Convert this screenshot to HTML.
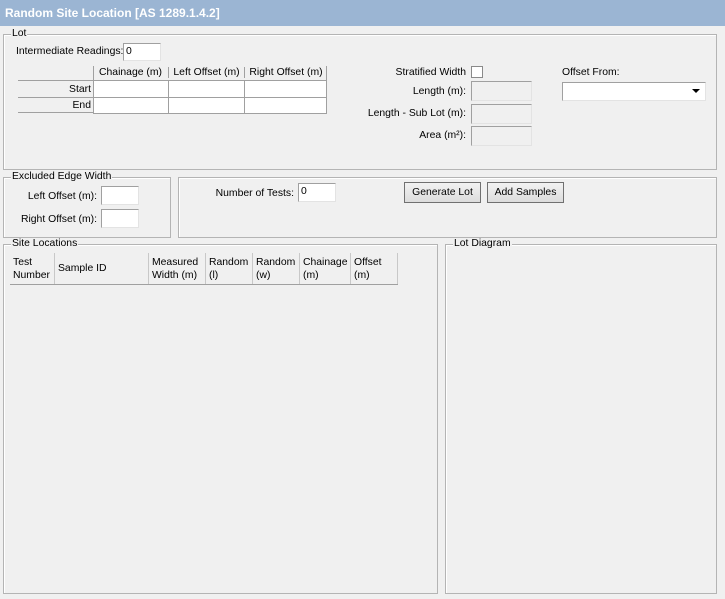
<!DOCTYPE html>
<html><head><style>
*{box-sizing:border-box}
body{margin:0;width:725px;height:599px;background:#f0f0f0;font-family:"Liberation Sans",Arial,sans-serif;font-size:10.4px;color:#000;position:relative;overflow:hidden}
.a{position:absolute;white-space:nowrap}
.title{left:0;top:0;width:725px;height:26px;background:#9bb5d3;color:#fff;font-weight:bold;font-size:12px;padding:6px 0 0 5px}
.fs{position:absolute;border:1px solid #b4b4b4;box-shadow:1px 1px 0 #fff inset}
.lg{position:absolute;top:-7px;left:7px;background:#f0f0f0;padding:0 1px;line-height:12px;white-space:nowrap}
.in{position:absolute;background:#fff;border:1px solid #a0a0a0;border-right-color:#e3e3e3;border-bottom-color:#e3e3e3;padding:1px 2px;line-height:14px}
.dis{background:#f0f0f0}
.r{position:absolute;text-align:right;white-space:nowrap}
.btn{position:absolute;border:1px solid #707070;background:linear-gradient(#f2f2f2,#dcdcdc);text-align:center;line-height:19px}
</style></head><body>
<div class="a title">Random Site Location [AS 1289.1.4.2]</div>

<div class="fs" style="left:3px;top:34px;width:714px;height:136px"><span class="lg">Lot</span></div>
<div class="a" style="left:16px;top:46px">Intermediate Readings:</div>
<div class="in" style="left:123px;top:43px;width:38px;height:18px">0</div>
<div class="a" style="left:18px;top:66px;width:309px;height:48px">
<div class="a" style="left:0;top:0;width:75px;height:15px;border-bottom:1px solid #a0a0a0"></div>
<div class="a" style="left:75px;top:0;width:234px;height:15px;border-left:1px solid #a0a0a0;border-bottom:1px solid #a0a0a0;border-right:1px solid #a0a0a0"></div>
<div class="a" style="left:75px;top:1px;width:75px;text-align:center">Chainage (m)</div>
<div class="a" style="left:150px;top:1px;width:76px;text-align:center;border-left:1px solid #a0a0a0">Left Offset (m)</div>
<div class="a" style="left:226px;top:1px;width:83px;text-align:center;border-left:1px solid #a0a0a0">Right Offset (m)</div>
<div class="a" style="left:0;top:15px;width:75px;height:32px;border-bottom:1px solid #a0a0a0"></div>
<div class="a" style="left:0;top:31px;width:75px;border-bottom:1px solid #a0a0a0"></div>
<div class="r" style="left:0;top:18px;width:73px">Start</div>
<div class="r" style="left:0;top:34px;width:73px">End</div>
<div class="a" style="left:75px;top:15px;width:234px;height:33px;background:#fff;border:1px solid #a0a0a0;border-top:none"></div>
<div class="a" style="left:75px;top:31px;width:234px;border-top:1px solid #a0a0a0"></div>
<div class="a" style="left:150px;top:15px;height:33px;border-left:1px solid #a0a0a0"></div>
<div class="a" style="left:226px;top:15px;height:33px;border-left:1px solid #a0a0a0"></div>
</div>

<div class="r" style="left:360px;top:67px;width:106px">Stratified Width</div>
<div class="a" style="left:471px;top:66px;width:12px;height:12px;background:#fff;border:1px solid #8a8a8a"></div>
<div class="r" style="left:340px;top:86px;width:126px">Length (m):</div>
<div class="r" style="left:340px;top:108px;width:126px">Length - Sub Lot (m):</div>
<div class="r" style="left:340px;top:130px;width:126px">Area (m²):</div>
<div class="in dis" style="left:471px;top:81px;width:61px;height:20px"></div>
<div class="in dis" style="left:471px;top:104px;width:61px;height:20px"></div>
<div class="in dis" style="left:471px;top:126px;width:61px;height:20px"></div>
<div class="a" style="left:562px;top:67px">Offset From:</div>
<div class="in" style="left:562px;top:82px;width:144px;height:19px"></div>
<div class="a" style="left:692px;top:89px;width:0;height:0;border-left:4px solid transparent;border-right:4px solid transparent;border-top:4px solid #000"></div>

<div class="fs" style="left:3px;top:177px;width:168px;height:61px"><span class="lg">Excluded Edge Width</span></div>
<div class="r" style="left:5px;top:191px;width:92px">Left Offset (m):</div>
<div class="r" style="left:5px;top:214px;width:92px">Right Offset (m):</div>
<div class="in" style="left:101px;top:186px;width:38px;height:19px"></div>
<div class="in" style="left:101px;top:209px;width:38px;height:19px"></div>

<div class="fs" style="left:178px;top:177px;width:539px;height:61px"></div>
<div class="r" style="left:190px;top:188px;width:104px">Number of Tests:</div>
<div class="in" style="left:298px;top:183px;width:38px;height:19px">0</div>
<div class="btn" style="left:404px;top:182px;width:77px;height:21px">Generate Lot</div>
<div class="btn" style="left:487px;top:182px;width:77px;height:21px">Add Samples</div>

<div class="fs" style="left:3px;top:244px;width:435px;height:350px"><span class="lg">Site Locations</span></div>
<div class="a" style="left:10px;top:253px;width:388px;height:32px;border-bottom:1px solid #a0a0a0">
<div class="a" style="left:3px;top:3px;line-height:13px">Test<br>Number</div>
<div class="a" style="left:44px;top:0;height:31px;border-left:1px solid #c8c8c8;padding:10px 3px">Sample ID</div>
<div class="a" style="left:138px;top:0;height:31px;border-left:1px solid #c8c8c8;padding:3px 3px;line-height:13px">Measured<br>Width (m)</div>
<div class="a" style="left:195px;top:0;height:31px;border-left:1px solid #c8c8c8;padding:3px 3px;line-height:13px">Random<br>(l)</div>
<div class="a" style="left:242px;top:0;height:31px;border-left:1px solid #c8c8c8;padding:3px 3px;line-height:13px">Random<br>(w)</div>
<div class="a" style="left:289px;top:0;height:31px;border-left:1px solid #c8c8c8;padding:3px 3px;line-height:13px">Chainage<br>(m)</div>
<div class="a" style="left:340px;top:0;height:31px;width:48px;border-left:1px solid #c8c8c8;border-right:1px solid #c8c8c8;padding:3px 3px;line-height:13px">Offset<br>(m)</div>
</div>

<div class="fs" style="left:445px;top:244px;width:272px;height:350px"><span class="lg">Lot Diagram</span></div>
</body></html>
